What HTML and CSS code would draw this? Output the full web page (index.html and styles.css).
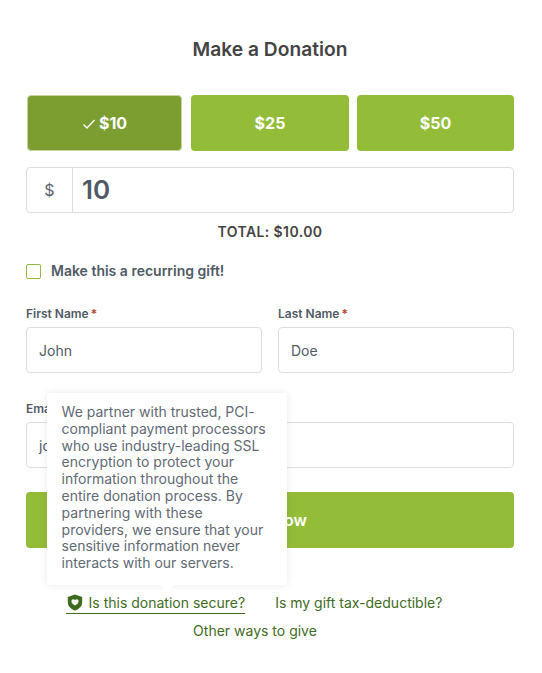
FILE: index.html
```html
<!DOCTYPE html>
<html lang="en">
<head>
<meta charset="utf-8">
<title>Make a Donation</title>
<link rel="stylesheet" href="styles.css">
</head>
<body>
<main class="page">
  <h1 class="title">Make a Donation</h1>
  <div class="levels">
    <button class="level level-active"><svg class="check" viewBox="0 0 14 12" width="14" height="12"><path d="M1.500 6.500 L5 10 L12.500 2" fill="none" stroke="#fff" stroke-width="1.300"/></svg>$10</button>
    <button class="level level-mid">$25</button>
    <button class="level level-last">$50</button>
  </div>
  <div class="amount">
    <span class="currency">$</span>
    <span class="amount-value">10</span>
  </div>
  <p class="total">TOTAL: $10.00</p>
  <label class="recurring"><span class="checkbox"></span>Make this a recurring gift!</label>
  <div class="row row-names">
    <div class="field">
      <span class="label">First Name<em>*</em></span>
      <span class="input">John</span>
    </div>
    <div class="field">
      <span class="label">Last Name<em>*</em></span>
      <span class="input">Doe</span>
    </div>
  </div>
  <div class="field field-email">
    <span class="label">Email<em>*</em></span>
    <span class="input">john.doe@example.com</span>
  </div>
  <button class="submit">Give Now</button>
  <nav class="links">
    <div class="links-row">
      <div class="secure-wrap">
        <div class="tooltip">We partner with trusted, PCI-compliant payment processors who use industry-leading SSL encryption to protect your information throughout the entire donation process. By partnering with these providers, we ensure that your sensitive information never interacts with our servers.</div>
        <a class="link link-secure"><svg class="shield" viewBox="0 0 16 17" width="16" height="17"><path fill-rule="evenodd" d="M8 .6 15.200 3v5.200c0 4-3 6.900-7.200 8.300C3.800 15.100.8 12.200.8 8.200V3L8 .6ZM8 11.600c2.300-1.500 3.600-2.800 3.600-4.300 0-1.200-.9-2-1.900-2-.7 0-1.300.3-1.700.9-.4-.6-1-.9-1.700-.9-1 0-1.900.8-1.900 2 0 1.500 1.300 2.800 3.600 4.300Z" fill="#3f6b1f"/></svg>Is this donation secure?</a>
      </div>
      <a class="link">Is my gift tax-deductible?</a>
    </div>
    <a class="link link-other">Other ways to give</a>
  </nav>
</main>
</body>
</html>
```

FILE: styles.css
```css
* { box-sizing: border-box; }
html, body { margin: 0; padding: 0; background: #fff; }
body { font-family: Inter, "Liberation Sans", sans-serif; color: #4f5a66; }
.page { width: 542px; height: 673px; padding: 38px 28px 0 26px; overflow: hidden; }
.title { margin: 0; font-size: 19.2px; line-height: 22px; font-weight: 600; color: #444; text-align: center; }
.levels { display: flex; margin-top: 35px; padding-left: 1px; }
.level { height: 56px; border: 0; border-radius: 4px; background: #93bd39; color: #fff; font: 700 16px Inter, "Liberation Sans", sans-serif; display: flex; align-items: center; justify-content: center; padding: 0; }
.level-active { width: 155px; background: #7c9e31; border: 1px solid #c4d49a; }
.level-mid { width: 158px; margin-left: 9px; }
.level-last { width: 157px; margin-left: 8px; }
.check { margin-right: 3px; margin-top: 1px; }
.amount { display: flex; height: 46px; margin-top: 16px; border: 1px solid #dcdddf; border-radius: 4px; align-items: stretch; }
.currency { width: 46px; border-right: 1px solid #dcdddf; display: flex; align-items: center; justify-content: center; font-size: 16px; color: #5a6570; }
.amount-value { padding-left: 9px; font-size: 26px; font-weight: 600; line-height: 44px; color: #4f5a66; }
.total { margin: 10px 0 0; font-size: 14px; line-height: 18px; font-weight: 600; letter-spacing: .4px; color: #444; text-align: center; }
.recurring { display: flex; align-items: center; margin-top: 21px; font-size: 14px; line-height: 18px; font-weight: 600; color: #4f5a66; }
.checkbox { width: 15px; height: 15px; margin-right: 10px; border: 1px solid #93bd39; border-radius: 2px; background: #fff; }
.row { display: grid; grid-template-columns: 236px 236px; column-gap: 16px; }
.row-names { margin-top: 26px; }
.field { display: flex; flex-direction: column; }
.field-email { margin-top: 28px; }
.label { font-size: 12px; line-height: 16px; font-weight: 600; color: #4f5a66; margin-bottom: 5px; }
.label em { font-style: normal; color: #b5442b; margin-left: 2px; }
.input { height: 46px; border: 1px solid #dcdddf; border-radius: 4px; padding-left: 12px; font-size: 14px; line-height: 46px; color: #4f5a66; overflow: hidden; white-space: nowrap; }
.submit { display: block; width: 488px; height: 56px; margin-top: 24px; border: 0; border-radius: 4px; background: #93bd39; color: #fff; font: 600 16px Inter, "Liberation Sans", sans-serif; padding: 0; }
.links { display: flex; flex-direction: column; align-items: center; font-size: 14px; line-height: 17px; margin: 45px 30px 0 0; color: #3f6b1f; }
.links-row { display: flex; align-items: flex-start; margin-left: -2px; }
.secure-wrap { position: relative; margin-right: 30px; }
.link { color: #3f6b1f; white-space: nowrap; display: flex; align-items: center; height: 19px; }
.link-secure { border-bottom: 1px solid #3f6b1f; height: 21px; padding-left: 1px; padding-bottom: 2px; }
.shield { margin-right: 6px; }
.link-other { margin-top: 7px; }
.tooltip { position: absolute; left: -19px; bottom: 29px; width: 240px; height: 192px; padding: 11px 15px; background: #fff; border-radius: 3px; box-shadow: 0 0 8px rgba(0,0,0,.09); font-size: 14px; line-height: 16.8px; color: #5f6a75; white-space: normal; }
.tooltip::after { content: ""; position: absolute; left: 113px; bottom: -7px; width: 0; height: 0; border-left: 7px solid transparent; border-right: 7px solid transparent; border-top: 7px solid #fff; }
```
